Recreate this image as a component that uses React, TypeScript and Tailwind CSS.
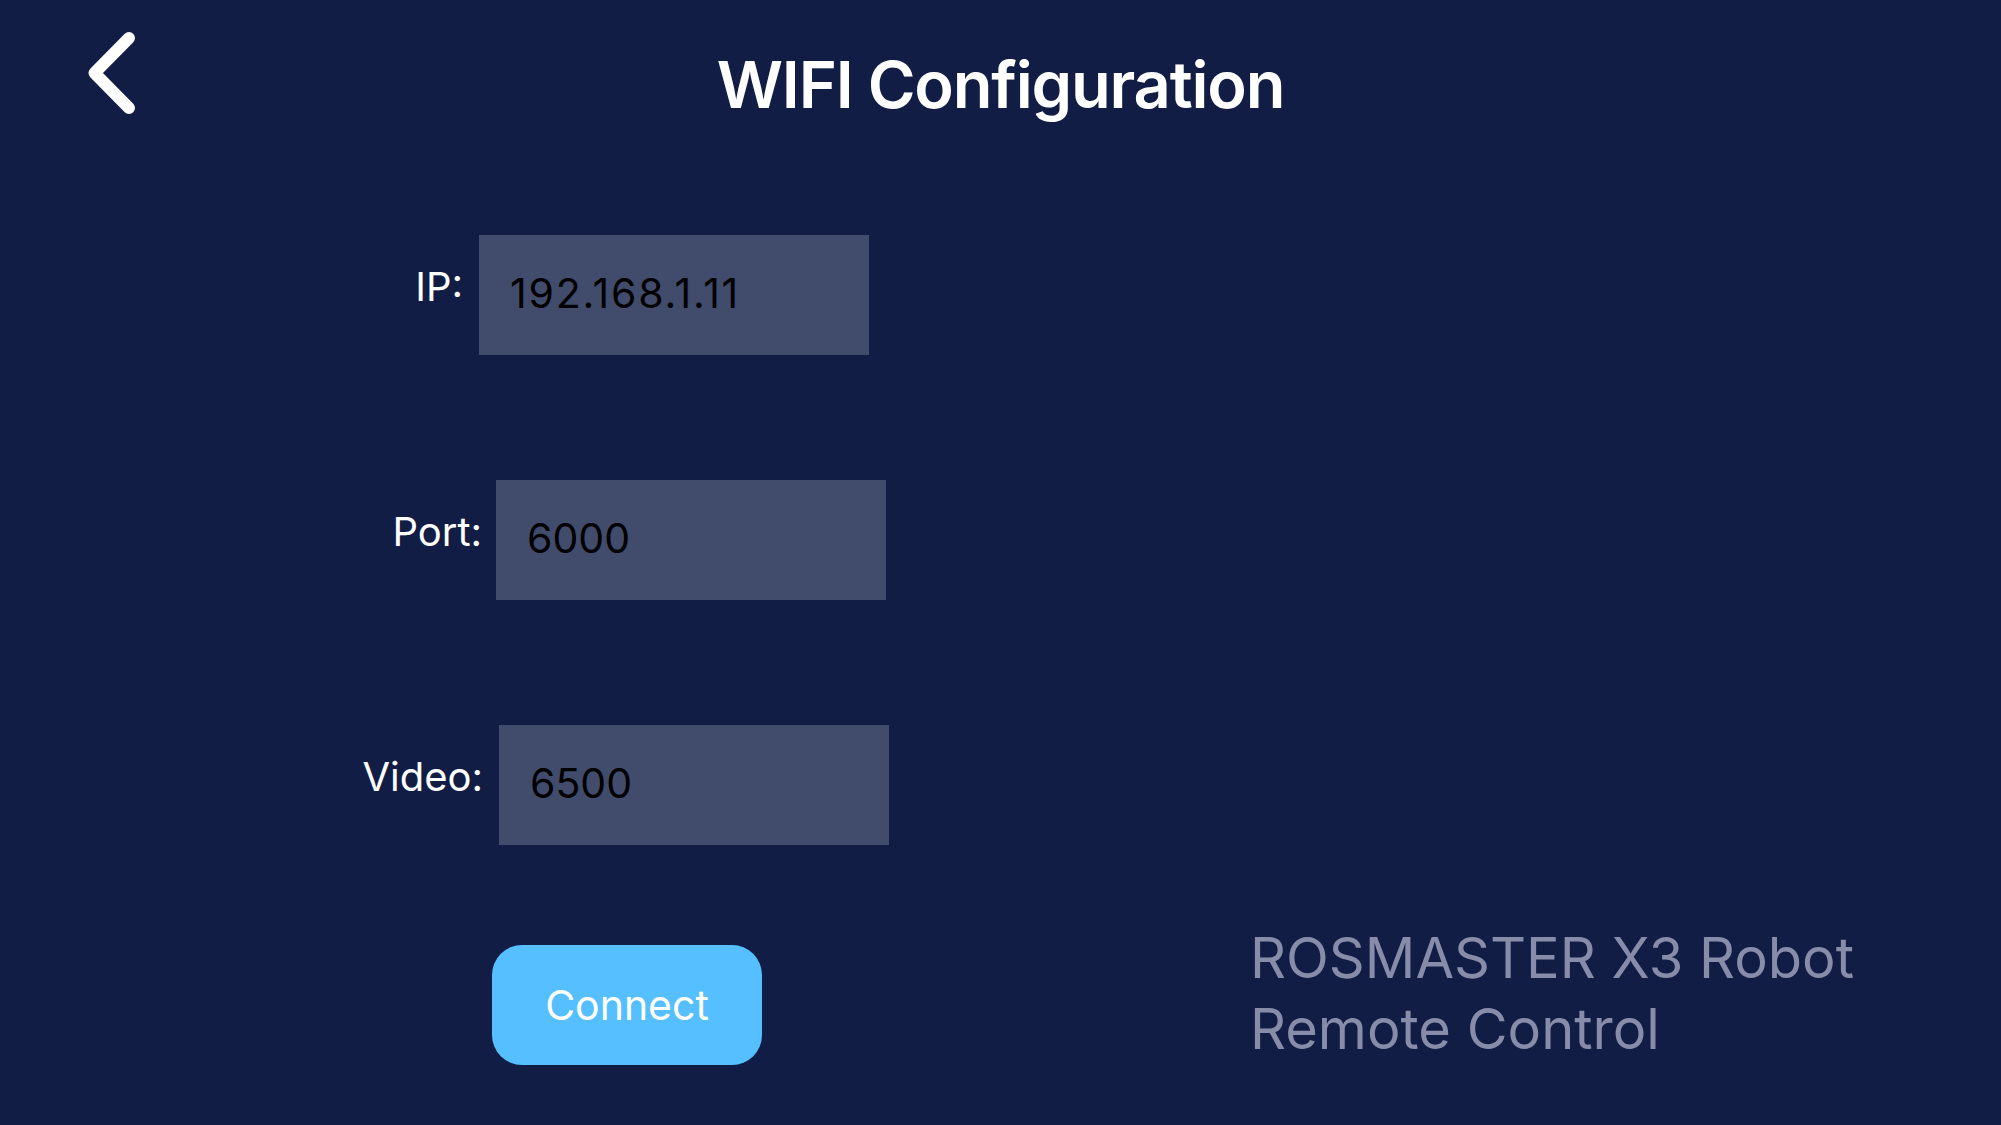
import React from 'react'

const fields = [
  { label: 'IP:', value: '192.168.1.11', labelWidth: 'w-[479px] pr-[16px]', tracking: 'tracking-[1.8px]' },
  { label: 'Port:', value: '6000', labelWidth: 'w-[496px] pr-[14px]', tracking: '' },
  { label: 'Video:', value: '6500', labelWidth: 'w-[499px] pr-[16px]', tracking: '' },
]

const App: React.FC = () => {
  return (
    <div className="w-[2001px] h-[1125px] overflow-hidden bg-[#121d45] font-['Inter','Noto_Sans',sans-serif]">
      {/* Header */}
      <div className="grid grid-cols-[1fr_auto_1fr] items-start pt-[52px]">
        <div className="pl-[70px] -mt-[22px] h-[65px]">
          <svg width="70" height="90" viewBox="0 0 70 90" fill="none">
            <path
              d="M59 8 L24.5 43 L59 78"
              stroke="white"
              strokeWidth="12"
              strokeLinecap="round"
              strokeLinejoin="round"
            />
          </svg>
        </div>
        <h1 className="text-[65px] leading-none font-semibold text-white tracking-[-1.2px]">
          WIFI Configuration
        </h1>
        <div />
      </div>

      {/* Form */}
      <div className="mt-[118px] flex flex-col gap-[125px]">
        {fields.map((f) => (
          <div key={f.label} className="flex items-center h-[120px]">
            <div className={`${f.labelWidth} text-right text-[40px] leading-none text-white pb-[17px]`}>
              {f.label}
            </div>
            <div className="w-[390px] h-[120px] bg-[#414b6b] flex items-center pl-[31px] pb-[3px]">
              <span className={`${f.tracking} text-[41px] leading-none text-black`}>{f.value}</span>
            </div>
          </div>
        ))}
      </div>

      {/* Bottom */}
      <div className="mt-[78px] flex items-end">
        <button className="ml-[492px] w-[270px] h-[120px] rounded-[30px] bg-[#55bfff] text-white text-[41px] leading-none flex items-center justify-center">
          Connect
        </button>
        <div className="ml-[488px] text-[56px] leading-[71px] text-[#878ca8]">
          ROSMASTER X3 Robot
          <br />
          Remote Control
        </div>
      </div>
    </div>
  )
}

export default App
